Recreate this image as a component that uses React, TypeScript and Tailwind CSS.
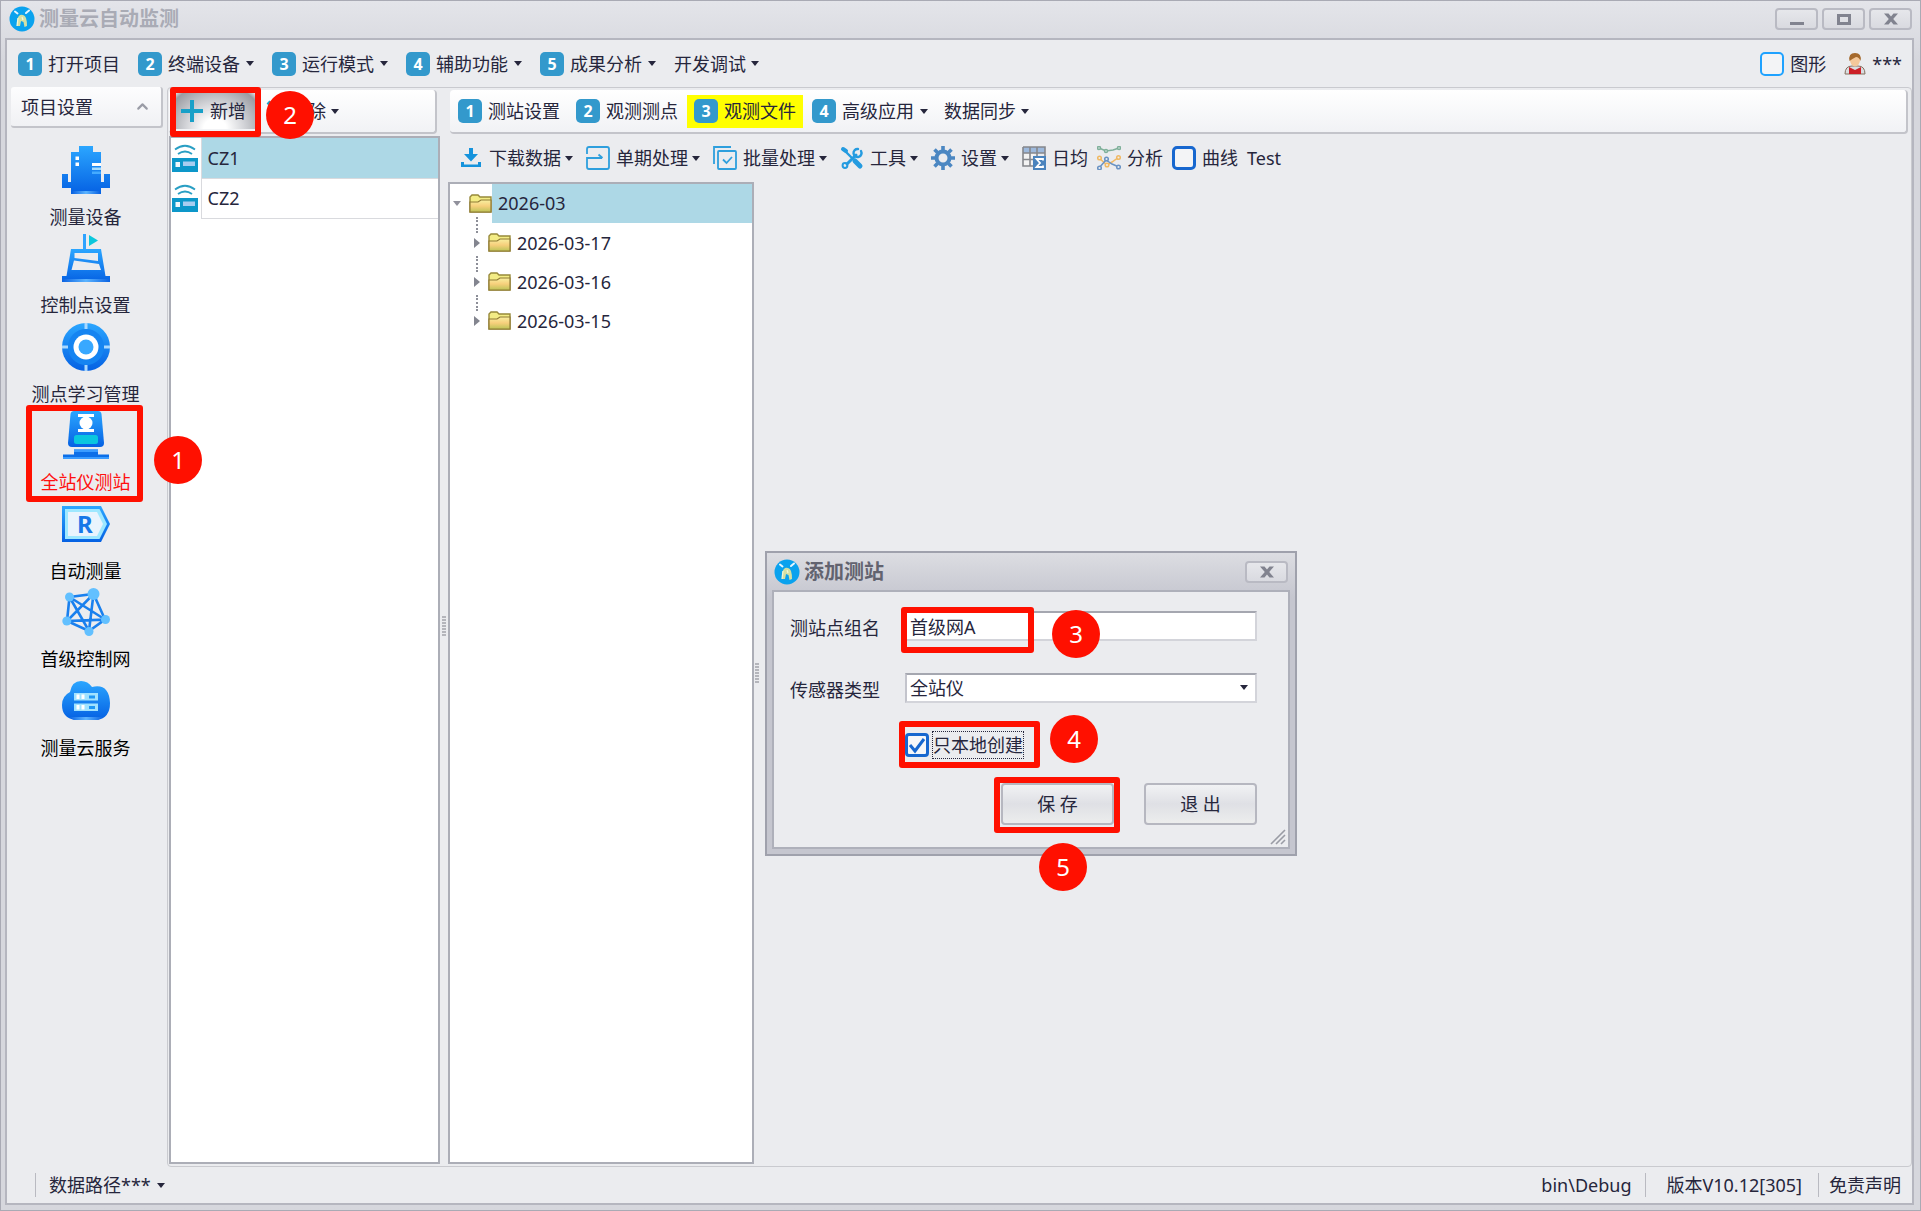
import type { ReactNode } from "react";
import clsx from "clsx";
import { ChevronUp } from "lucide-react";

/* ── Small shared pieces ── */

function Caret({ className }: { className?: string }) {
  return (
    <svg viewBox="0 0 8 5" className={clsx("h-[5px] w-2 shrink-0", className)}>
      <path d="M0 0H8L4 5Z" fill="#26263c" />
    </svg>
  );
}

function NumberBadge({ value }: { value: number }) {
  return (
    <span className="flex size-6 shrink-0 items-center justify-center rounded-[5px] bg-[#3399cc] text-base leading-6 font-bold text-white">
      {value}
    </span>
  );
}

function Logo() {
  return (
    <svg viewBox="0 0 26 26" className="size-[26px] shrink-0">
      <circle cx="13" cy="13" r="12.5" fill="#0aa2ee" />
      <path d="M8 20Q7 12 11 9Q15 8 17 12Q18 15 18 20L15.500 21L14.500 16L12 15L11 20Z" fill="#d3e0a4" />
      <path d="M9 12L8 20M13 11L14 14" stroke="#f4f7d8" strokeWidth="1.200" />
      <path d="M6 5.500L8.500 7.500M17 7L20 4.500" stroke="#e4f6ff" strokeWidth="2" strokeLinecap="round" />
    </svg>
  );
}

function FrameButton({ label, className, children }: { label: string; className?: string; children: ReactNode }) {
  return (
    <button
      aria-label={label}
      className={clsx(
        "flex h-[22px] w-[43px] items-center justify-center rounded-[4px] border-2 border-[#b9bac3] bg-linear-to-b from-[#e6e7eb] to-[#d9dae0]",
        className,
      )}
    >
      {children}
    </button>
  );
}

function CloseGlyph() {
  return (
    <svg viewBox="0 0 14 12" className="h-3 w-3.5">
      <path d="M0 0.5H4.5L7 3.5L9.500.5H14L9.200 6L14 11.500H9.500L7 8.500L4.500 11.500H0L4.800 6Z" fill="#81838f" />
    </svg>
  );
}

function Grip() {
  return (
    <div className="flex flex-col gap-px">
      {[0, 1, 2, 3, 4, 5, 6].map((n) => (
        <span key={n} className="h-0.5 w-1 bg-[#b4b5bb]" />
      ))}
    </div>
  );
}

/* ── Sidebar icons, 48x48 ── */

function Gradients() {
  return (
    <svg className="absolute size-0" aria-hidden="true">
      <defs>
        <linearGradient id="blue" x1="0" y1="0" x2="0" y2="1">
          <stop offset="0" stopColor="#2ba6ff" />
          <stop offset="1" stopColor="#0561e3" />
        </linearGradient>
        <linearGradient id="foot" x1="0" y1="0" x2="1" y2="0">
          <stop offset="0" stopColor="#0b63e2" />
          <stop offset="0.5" stopColor="#5cb4ff" />
          <stop offset="1" stopColor="#0b63e2" />
        </linearGradient>
        <linearGradient id="folder" x1="0" y1="0" x2="0" y2="1">
          <stop offset="0" stopColor="#f8f0a0" />
          <stop offset="0.5" stopColor="#f7cf7c" />
          <stop offset="1" stopColor="#bcc456" />
        </linearGradient>
      </defs>
    </svg>
  );
}

function DeviceIcon() {
  return (
    <>
      <path d="M17 0H31V6H39V36H42V28H48V42H39V48H9V42H0V28H6V36H9V6H17Z" fill="url(#blue)" />
      <path d="M10 45H38V48H10Z" fill="url(#foot)" />
      <path d="M13.500 10.500H17V14H13.500ZM13.500 16.500H17V20H13.500ZM30 17H39V20H30Z" fill="#fff" />
      <path d="M30 21.500H39V24H30Z" fill="#a5dcff" />
      <path d="M30 25.500H39V28H30Z" fill="#45abff" />
    </>
  );
}

function ControlPointIcon() {
  return (
    <>
      <path d="M21 0H24V15H21Z" fill="#2ea3ff" />
      <path d="M27 1L36 6.500L27 12Z" fill="#0bc7dc" />
      <path
        d="M9 15H39L43.500 42H48V48H0V42H4.500ZM12.500 19V24L36 27V19ZM12 26.500L9.500 36H39L37 30Z"
        fill="url(#blue)"
        fillRule="evenodd"
      />
      <path d="M0 45H48V48H0Z" fill="url(#foot)" />
    </>
  );
}

function TargetIcon() {
  return (
    <>
      <circle cx="24" cy="24" r="24" fill="url(#blue)" />
      <circle cx="24" cy="24" r="18" fill="#1584f1" />
      <circle cx="24" cy="24" r="12.500" fill="#fff" />
      <circle cx="24" cy="24" r="7.500" fill="#38a8ff" />
      <path d="M22.500 0H25.500V6H22.500ZM22.500 42H25.500V48H22.500ZM0 22.500H6V25.500H0ZM42 22.500H48V25.500H42Z" fill="#a8d8ff" />
    </>
  );
}

function StationIcon() {
  return (
    <>
      <path d="M12 0H36Q39 0 39.500 3L42 32Q42 36 38 36H10Q6 36 6 32L8.500 3Q9 0 12 0Z" fill="url(#blue)" />
      <path d="M16 3H32V6H16ZM16 18H32V21H16Z" fill="#fff" />
      <circle cx="24" cy="12" r="6.500" fill="#fff" />
      <rect x="12" y="24" width="24" height="9" rx="2.500" fill="#0ac6df" />
      <path d="M12 38.500H36V43.500H47V48H1V43.500H12Z" fill="#0c6fe8" />
      <path d="M12 38.500H36V41H12ZM1 46H47V48H1Z" fill="#3a9cff" />
    </>
  );
}

function AutoIcon() {
  return (
    <>
      <path d="M0 6H39L48 24L39 42H0Z" fill="url(#blue)" />
      <path d="M3 9H37.500L45 24L37.500 39H3Z" fill="#9ee8ff" />
      <path d="M6 12H35L41 24L35 36H6Z" fill="#e9f4fd" />
      <text x="15" y="33" fontSize="24" fontWeight="700" fill="#1778e8">
        R
      </text>
    </>
  );
}

function NetworkIcon() {
  return (
    <>
      <path
        d="M7.500 9L31.500 6L43 31.500L27 43L5 33ZM31.500 6L5 33L43 31.500L7.500 9L27 43Z"
        fill="none"
        stroke="#1a80ee"
        strokeWidth="2.600"
      />
      <g fill="#62c0ff">
        <circle cx="7.500" cy="9" r="4.500" />
        <circle cx="31.500" cy="6" r="6" />
        <circle cx="43.500" cy="31.500" r="4.500" />
        <circle cx="27" cy="43.500" r="4.500" />
        <circle cx="4.800" cy="33" r="4.500" />
      </g>
    </>
  );
}

function CloudIcon() {
  return (
    <>
      <path d="M13 43Q0 41 0 28Q0 19 8 15Q10 4 19 4Q26 4 30 10Q47 6 48 26Q48 41 35 43Z" fill="url(#blue)" />
      <path d="M7 40H41L36 43H12Z" fill="url(#foot)" />
      <path d="M12 16H36V23.500H12ZM12 26.500H36V34H12Z" fill="#a0e2ff" />
      <path d="M14.500 17.500H17.500V22H14.500ZM19.500 17.500H22.500V22H19.500ZM14.500 28H17.500V32.500H14.500ZM19.500 28H22.500V32.500H19.500Z" fill="#fff" />
      <path d="M27 18.500H33V21.500H27ZM27 29H33V32H27Z" fill="#1f98f5" />
    </>
  );
}

const sidebarItems = [
  { label: "测量设备", icon: <DeviceIcon />, color: "text-[#26263c]" },
  { label: "控制点设置", icon: <ControlPointIcon />, color: "text-[#26263c]" },
  { label: "测点学习管理", icon: <TargetIcon />, color: "text-[#26263c]" },
  { label: "全站仪测站", icon: <StationIcon />, color: "text-[#ff1010]" },
  { label: "自动测量", icon: <AutoIcon />, color: "text-black" },
  { label: "首级控制网", icon: <NetworkIcon />, color: "text-black" },
  { label: "测量云服务", icon: <CloudIcon />, color: "text-black" },
];

/* ── Toolbar icons, 24x24 ── */

const toolIcons = {
  download: (
    <>
      <path d="M10 2H14V8H19L12 15.500L5 8H10Z" fill="#1593dc" />
      <path d="M2 16H5V18.500H19V16H22V21H2Z" fill="#1593dc" />
    </>
  ),
  single: (
    <g fill="none" stroke="#2e9fdd" strokeWidth="1.800">
      <path d="M1 8V3Q1 1 3 1H21Q23 1 23 3V21Q23 23 21 23H3Q1 23 1 21V12H16" />
      <path d="M12.500 8.500L16.500 12" />
    </g>
  ),
  batch: (
    <g fill="none" stroke="#2e9fdd" strokeWidth="1.800">
      <path d="M1 18V1H18" />
      <rect x="5" y="5" width="18" height="18" rx="1" />
      <path d="M10 13.500L13.500 17L19 11" />
    </g>
  ),
  tools: (
    <g fill="none" stroke="#249be0" strokeLinecap="round">
      <path d="M4 4L12 12" strokeWidth="2.400" />
      <path d="M3 3L6 5" strokeWidth="4" />
      <path d="M15 15L20 20" strokeWidth="5" />
      <path d="M16 9L7 18" strokeWidth="3" />
      <path d="M21 5A4 4 0 1 1 18 3" strokeWidth="2.400" />
      <circle cx="5" cy="19.500" r="2.400" strokeWidth="2" />
    </g>
  ),
  gear: (
    <g fill="none" stroke="#4b87c2">
      <circle cx="12" cy="12" r="6.500" strokeWidth="4" />
      <path
        d="M12 0V4M12 20V24M0 12H4M20 12H24M3.500 3.500L6.500 6.500M17.500 17.500L20.500 20.500M3.500 20.500L6.500 17.500M17.500 6.500L20.500 3.500"
        strokeWidth="3.600"
      />
    </g>
  ),
  daily: (
    <>
      <path d="M1 1H23V7H1Z" fill="#9db9dc" />
      <path d="M1 7H12V20H1Z" fill="#f3f3f3" />
      <path d="M1 1H23V10M1 1V20H11M1 7H23M8 1V20M15 1V10M1 13.500H11" fill="none" stroke="#85878c" strokeWidth="1.600" />
      <path d="M11 10H24V24H11Z" fill="#4a83bd" />
      <path d="M21 14.500V13H14.500L18 17L14.500 21H21V19.500" fill="none" stroke="#fff" strokeWidth="1.800" />
    </>
  ),
  analysis: (
    <g fill="none" strokeWidth="1.500">
      <path d="M2 2L9 5L16 4L22 2" stroke="#7fb09a" />
      <path d="M2 12L10 19L15 16L22 11" stroke="#f0b964" />
      <path d="M2 22L9 14L15 18L22 21" stroke="#6a93c4" />
      <g fill="#ebecef">
        <g stroke="#7fb09a">
          <circle cx="2" cy="2" r="1.500" />
          <circle cx="9" cy="5" r="1.500" />
          <circle cx="22" cy="2" r="1.500" />
        </g>
        <g stroke="#f0b964">
          <circle cx="2.500" cy="12" r="1.800" />
          <circle cx="10" cy="19" r="1.800" />
          <circle cx="21.500" cy="11.500" r="1.800" />
        </g>
        <g stroke="#6a93c4">
          <circle cx="2.500" cy="22" r="1.800" />
          <circle cx="9.500" cy="13" r="1.800" />
          <circle cx="21.500" cy="21" r="1.800" />
        </g>
      </g>
    </g>
  ),
};

const fileTools = [
  { label: "下载数据", icon: toolIcons.download, menu: true },
  { label: "单期处理", icon: toolIcons.single, menu: true },
  { label: "批量处理", icon: toolIcons.batch, menu: true },
  { label: "工具", icon: toolIcons.tools, menu: true },
  { label: "设置", icon: toolIcons.gear, menu: true },
  { label: "日均", icon: toolIcons.daily, menu: false },
  { label: "分析", icon: toolIcons.analysis, menu: false },
];

function FolderIcon() {
  return (
    <svg viewBox="0 0 23 19" className="h-[19px] w-[23px] shrink-0">
      <path d="M1 18V3L3 1H9L11 3H22V18Z" fill="#f3ec85" stroke="#97893a" strokeWidth="1.400" />
      <path d="M1 8H9L12 6H22V18H1Z" fill="url(#folder)" stroke="#8f7a35" strokeWidth="1.200" />
    </svg>
  );
}

function StationRowIcon() {
  return (
    <svg viewBox="0 0 28 32" className="h-8 w-7">
      <g fill="none" stroke="#2a9fc4" strokeWidth="1.800">
        <path d="M4 7.500Q14 0 24 7.500" />
        <path d="M7 12Q14 7 21 12" />
      </g>
      <path d="M1 16H27V30H1Z" fill="#0d97c9" />
      <path d="M12 19.500H24V24H12Z" fill="#a8cdf0" />
      <path d="M4.500 20H9V25H4.500Z" fill="#f2f8fc" />
    </svg>
  );
}

function UserIcon() {
  return (
    <svg viewBox="0 0 22 24" className="h-6 w-[22px]">
      <path d="M1 22Q1 14 8 14H14Q21 14 21 22Z" fill="#d9dde0" stroke="#85705f" strokeWidth="1" />
      <path d="M5 22V15L11 18L17 15V22Z" fill="#cc2027" />
      <ellipse cx="11" cy="8" rx="5" ry="6.500" fill="#f4c89a" />
      <path d="M5.500 9Q4 1 11 1Q18 1 16.500 9Q15 5 12 5Q8 7 5.500 9Z" fill="#a5692c" />
    </svg>
  );
}

/* ── Numbered callouts that point at the steps ── */

const highlights = [
  "left-[26px] top-[405px] h-[97px] w-[117px]",
  "left-[170px] top-[87px] h-[50px] w-[91px]",
  "left-[901px] top-[607px] h-[46px] w-[133px]",
  "left-[899px] top-[721px] h-[47px] w-[141px]",
  "left-[994px] top-[777px] h-[56px] w-[126px]",
];

const steps = [
  "left-[154px] top-[436px]",
  "left-[266px] top-[91px]",
  "left-[1052px] top-[610px]",
  "left-[1050px] top-[715px]",
  "left-[1039px] top-[843px]",
];

function Callouts() {
  return (
    <div className="pointer-events-none">
      {highlights.map((place) => (
        <div key={place} className={clsx("absolute rounded-[3px] border-6 border-[#ff1000]", place)} />
      ))}
      {steps.map((place, i) => (
        <div
          key={place}
          className={clsx(
            "absolute flex size-12 items-center justify-center rounded-full bg-[#ff1000] text-2xl leading-none text-white",
            place,
          )}
        >
          {i + 1}
        </div>
      ))}
    </div>
  );
}

/* ── Page sections ── */

function TitleBar() {
  return (
    <header className="flex h-[38px] items-center gap-1 pr-0.5 pl-1">
      <Logo />
      <h1 className="text-xl leading-6 font-bold text-[#a9abb5]">测量云自动监测</h1>
      <div className="ml-auto flex gap-1">
        <FrameButton label="最小化">
          <span className="mt-2 h-[3px] w-3.5 bg-[#81838f]" />
        </FrameButton>
        <FrameButton label="最大化">
          <span className="h-[11px] w-3.5 border-3 border-[#81838f]" />
        </FrameButton>
        <FrameButton label="关闭">
          <CloseGlyph />
        </FrameButton>
      </div>
    </header>
  );
}

const menuItems = ["打开项目", "终端设备", "运行模式", "辅助功能", "成果分析"];

function MenuBar() {
  return (
    <nav className="flex h-[47px] items-center gap-[18px] pr-2.5 pl-[11px]">
      {menuItems.map((label, i) => (
        <button key={label} className="flex items-center gap-1.5">
          <NumberBadge value={i + 1} />
          <span>{label}</span>
          {i > 0 && <Caret />}
        </button>
      ))}
      <button className="flex items-center gap-[5px]">
        开发调试
        <Caret />
      </button>
      <label className="ml-auto flex items-center gap-1.5">
        <input
          type="checkbox"
          className="size-6 appearance-none rounded-[5px] border-2 border-[#1fa2ff] bg-[#f3f4f6]"
        />
        图形
      </label>
      <button className="flex items-center gap-1.5">
        <UserIcon />
        <span>***</span>
      </button>
    </nav>
  );
}

function Sidebar() {
  return (
    <aside className="w-[160px] shrink-0 pr-1 pl-1">
      <button className="flex h-[41px] w-full items-center justify-between rounded-[3px] border-r-2 border-b-2 border-[#c3c4ca] bg-linear-to-b from-[#fdfdfe] to-[#f0f1f4] pr-2.5 pl-2.5">
        项目设置
        <ChevronUp size={17} strokeWidth={3} className="text-[#9a9ca6]" />
      </button>
      <ul className="mt-[18px] flex h-[619px] flex-col pr-[3px]">
        {sidebarItems.map(({ label, icon, color }) => (
          <li key={label} className="flex-1">
            <button className={clsx("flex w-full flex-col items-center gap-[11px]", color)}>
              <svg viewBox="0 0 48 48" className="size-12">
                {icon}
              </svg>
              <span className="leading-6">{label}</span>
            </button>
          </li>
        ))}
      </ul>
    </aside>
  );
}

function StationList() {
  return (
    <section className="flex w-[271px] shrink-0 flex-col gap-0.5">
      <div className="mt-0.5 mr-[3px] flex h-11 items-center rounded-[4px] border-r-2 border-b-2 border-[#c3c4ca] bg-linear-to-b from-white to-[#f1f2f5] pl-1.5">
        <button className="flex h-9 w-20 items-center gap-[7px] bg-[radial-gradient(ellipse_at_bottom,#ffffff_20%,#d5d6da_50%,#9a9ca2_90%,#e6e7ea_100%)] pl-1.5">
          <svg viewBox="0 0 22 22" className="size-[22px]">
            <path d="M9 0H13V9H22V13H13V22H9V13H0V9H9Z" fill="#18a0c8" />
          </svg>
          新增
        </button>
        <button aria-label="删除" className="ml-2.5 flex items-center gap-[5px]">
          <svg viewBox="0 0 24 24" className="mr-3.5 size-6">
            <path d="M3 3L21 21M21 3L3 21" stroke="#18a0c8" strokeWidth="4" />
          </svg>
          除
          <Caret />
        </button>
      </div>
      <div className="flex-1 border-2 border-[#acaeb7] bg-white">
        <table className="w-full border-collapse">
          <tbody>
            {["CZ1", "CZ2"].map((name, i) => (
              <tr key={name} className="h-10">
                <td className="w-[30px] p-0">
                  <StationRowIcon />
                </td>
                <td className={clsx("border-b border-l border-[#d9dade] px-1.5", i === 0 && "bg-[#add8e6]")}>{name}</td>
              </tr>
            ))}
          </tbody>
        </table>
      </div>
    </section>
  );
}

const tabs = ["测站设置", "观测测点", "观测文件", "高级应用"];

function FileTree() {
  return (
    <div className="w-[306px] shrink-0 border-2 border-[#acaeb7] bg-white">
      <div className="flex h-[39px] items-center">
        <Caret className="mr-2 ml-[3px] opacity-50" />
        <FolderIcon />
        <span className="flex-1 self-stretch bg-[#add8e6] pl-1.5 leading-[39px]">2026-03</span>
      </div>
      <ul>
        {["2026-03-17", "2026-03-16", "2026-03-15"].map((day) => (
          <li key={day} className="flex h-[39px] items-center">
            <span className="relative mr-2 ml-[23px] flex h-full w-[7px] items-center justify-center">
              <span className="absolute -top-1.5 h-4 border-l-2 border-dotted border-[#8d8f98]" />
              <svg viewBox="0 0 6 10" className="h-2.5 w-1.5">
                <path d="M0 0L6 5L0 10Z" fill="#83858f" />
              </svg>
            </span>
            <FolderIcon />
            <span className="pl-1.5">{day}</span>
          </li>
        ))}
      </ul>
    </div>
  );
}

function Workspace() {
  return (
    <section className="flex min-w-0 flex-1 flex-col pr-[3px]">
      <div className="mt-0.5 ml-0.5 flex h-11 items-center gap-0.5 rounded-[4px] border-r-2 border-b-2 border-[#c3c4ca] bg-linear-to-b from-white to-[#f1f2f5] pl-px">
        {tabs.map((label, i) => (
          <button
            key={label}
            className={clsx("flex h-[33px] items-center gap-1.5 px-[7px]", label === "观测文件" && "bg-[#ffff00]")}
          >
            <NumberBadge value={i + 1} />
            {label}
            {i === 3 && <Caret />}
          </button>
        ))}
        <button className="flex items-center gap-[5px] pl-[7px]">
          数据同步
          <Caret />
        </button>
      </div>
      <div className="flex h-12 items-center gap-[9px] pl-[11px]">
        {fileTools.map(({ label, icon, menu }) => (
          <button key={label} className={clsx("flex items-center", menu && "pr-1")}>
            <svg viewBox="0 0 24 24" className="mr-1.5 size-6">
              {icon}
            </svg>
            {label}
            {menu && <Caret className="ml-1" />}
          </button>
        ))}
        <label className="flex items-center gap-1.5">
          <input
            type="checkbox"
            className="size-6 appearance-none rounded-[5px] border-3 border-[#1767cf] bg-[#f3f4f6]"
          />
          曲线
        </label>
        <button>Test</button>
      </div>
      <div className="flex flex-1">
        <FileTree />
        <div className="flex w-2 flex-col justify-center pl-px">
          <Grip />
        </div>
      </div>
    </section>
  );
}

function StatusBar() {
  return (
    <footer className="flex h-[36px] items-center pr-[11px] pl-7">
      <span className="h-6 w-px bg-[#b9bac1]" />
      <button className="ml-[13px] flex items-center gap-1.5">
        数据路径***
        <Caret />
      </button>
      <span className="ml-auto">bin\Debug</span>
      <span className="mr-5 ml-3.5 h-6 w-px bg-[#b9bac1]" />
      <span>版本V10.12[305]</span>
      <span className="mr-2.5 ml-4 h-6 w-px bg-[#b9bac1]" />
      <a href="#disclaimer">免责声明</a>
    </footer>
  );
}

function DialogButton({ children }: { children: ReactNode }) {
  return (
    <button className="h-[42px] w-[113px] rounded-[4px] border-2 border-[#b6b7c0] bg-linear-to-b from-[#f1f2f4] via-[#dfe0e5] to-[#eceded]">
      {children}
    </button>
  );
}

function AddStationDialog() {
  return (
    <div
      role="dialog"
      aria-labelledby="dialog-title"
      className="absolute top-[551px] left-[765px] w-[532px] border-2 border-[#9fa1ac] bg-linear-to-b from-[#dcdde2] to-[#c5c6cf] to-15% px-[5px] pb-[5px]"
    >
      <div className="flex h-[37px] items-center gap-1 pl-0.5">
        <Logo />
        <h2 id="dialog-title" className="text-xl leading-6 font-bold text-[#62636f]">
          添加测站
        </h2>
        <FrameButton label="关闭" className="mr-0.5 ml-auto">
          <CloseGlyph />
        </FrameButton>
      </div>
      <form className="relative border-2 border-[#aeb0ba] bg-[#ebecef] pt-[19px] pr-[31px] pb-[22px] pl-4">
        <div className="flex items-center">
          <label htmlFor="group-name" className="w-[115px] pt-1">
            测站点组名
          </label>
          <input
            id="group-name"
            defaultValue="首级网A"
            className="h-[30px] flex-1 border-2 border-t-[#a5a7b0] border-r-[#d3d4da] border-b-[#d3d4da] border-l-[#c3c4cc] bg-white pl-[3px] outline-none"
          />
        </div>
        <div className="mt-8 flex items-center">
          <label htmlFor="sensor-type" className="w-[115px] pt-1">
            传感器类型
          </label>
          <div className="relative flex-1">
            <select
              id="sensor-type"
              className="block h-[30px] w-full appearance-none border-2 border-t-[#a5a7b0] border-r-[#d3d4da] border-b-[#d3d4da] border-l-[#c3c4cc] bg-white pl-[3px] leading-6 outline-none"
            >
              <option>全站仪</option>
            </select>
            <Caret className="absolute top-3 right-2 h-1.5 w-2.5" />
          </div>
        </div>
        <label className="mt-7 ml-[115px] flex w-fit items-center gap-[3px]">
          <span className="relative flex">
            <input
              type="checkbox"
              defaultChecked
              className="peer size-6 appearance-none rounded-[4px] border-3 border-[#1767cf] bg-[#f6f7f9]"
            />
            <svg viewBox="0 0 24 24" className="absolute inset-0 hidden size-6 peer-checked:block">
              <path d="M5 12L10 18L19 6" fill="none" stroke="#1767cf" strokeWidth="3" />
            </svg>
          </span>
          <span className="border border-dotted border-[#26263c] leading-[26px]">只本地创建</span>
        </label>
        <div className="mt-6 flex justify-end gap-[30px]">
          <DialogButton>保 存</DialogButton>
          <DialogButton>退 出</DialogButton>
        </div>
        <svg viewBox="0 0 16 16" className="absolute right-0.5 bottom-0.5 size-4">
          <path d="M1 15L15 1M6 15L15 6M11 15L15 11" stroke="#9a9ca5" strokeWidth="1.600" />
        </svg>
      </form>
    </div>
  );
}

export default function App() {
  return (
    <div className="relative flex h-screen flex-col overflow-hidden bg-linear-to-b from-[#e4e5ea] to-[#d6d7dd] to-5% pr-[7px] pb-1.5 pl-[5px] font-['Noto_Sans','Noto_Sans_CJK_SC',sans-serif] text-[18px] leading-6 text-[#26263c] inset-ring inset-ring-[#a9aab4]">
      <Gradients />
      <TitleBar />
      <div className="flex min-h-0 flex-1 flex-col border-2 border-[#b5b6bf] bg-[#ebecef]">
        <MenuBar />
        <div className="flex min-h-0 flex-1">
          <Sidebar />
          <main className="flex min-w-0 flex-1 rounded-[4px] border border-[#c9cacf] pb-0.5 pl-px">
            <StationList />
            <div className="flex w-2 flex-col justify-center pl-0.5">
              <Grip />
            </div>
            <Workspace />
          </main>
        </div>
        <StatusBar />
      </div>
      <AddStationDialog />
      <Callouts />
    </div>
  );
}
